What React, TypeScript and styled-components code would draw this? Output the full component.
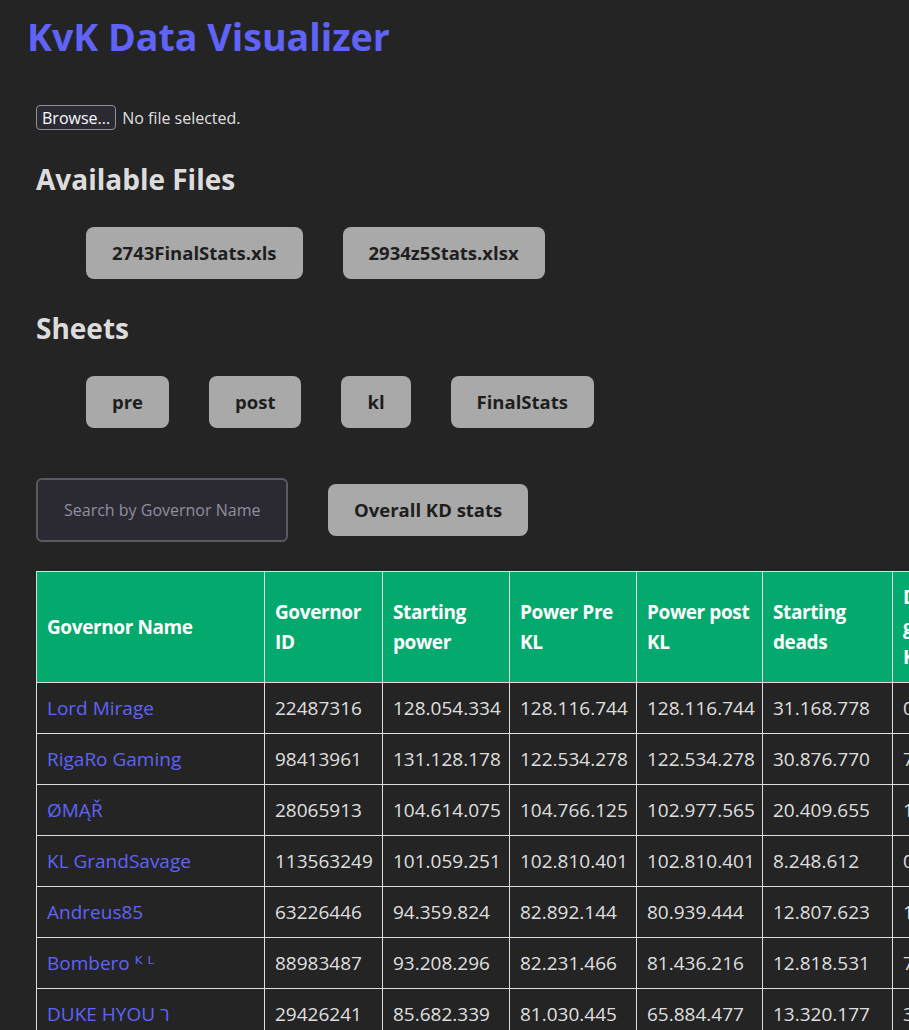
import React, { useState } from 'react'
import styled, { createGlobalStyle } from 'styled-components'

const GlobalStyle = createGlobalStyle`
  html, body {
    margin: 0;
    padding: 0;
    background-color: #242424;
    overflow-x: hidden;
  }
  body {
    font-family: 'Open Sans', 'DejaVu Sans', sans-serif;
    color: rgba(255, 255, 255, 0.87);
    line-height: 1.5;
  }
`

const Page = styled.div`
  padding-top: 14px;
  padding-bottom: 40px;
`

const Title = styled.h1`
  margin: 0;
  padding-left: 27px;
  font-size: 37.6px;
  font-weight: 700;
  line-height: 1.2;
  color: #5f63f7;
`

const Main = styled.div`
  padding: 0 36px;
`

const FileRow = styled.div`
  display: flex;
  align-items: center;
  gap: 6px;
  margin-top: 46px;
  font-size: 16px;
`

const BrowseButton = styled.button`
  font-family: inherit;
  font-size: 16px;
  color: #fbfbfe;
  background-color: #2b2a33;
  border: 1px solid #8f8f9d;
  border-radius: 4px;
  padding: 0 5px;
  height: 25px;
  line-height: 22px;
`

const Heading = styled.h2`
  margin: 30px 0 0 0;
  font-size: 28px;
  font-weight: 700;
  line-height: 1.4;
  color: rgba(255, 255, 255, 0.87);
`

const ButtonRow = styled.div`
  display: flex;
  gap: 40px;
  margin: 28px 0 0 50px;
`

const GrayButton = styled.button`
  font-family: inherit;
  font-size: 18.5px;
  font-weight: 700;
  color: #1e1e1e;
  background-color: #a9a9a9;
  border: none;
  border-radius: 8px;
  padding: 11px 26px;
  line-height: 30px;
  cursor: pointer;
`

const SearchRow = styled.div`
  display: flex;
  align-items: center;
  gap: 40px;
  margin-top: 50px;
`

const SearchInput = styled.input`
  box-sizing: border-box;
  width: 252px;
  height: 64px;
  padding: 0 26px;
  font-family: inherit;
  font-size: 16px;
  color: #fbfbfe;
  background-color: #2b2a33;
  border: 2px solid #5b5a63;
  border-radius: 6px;
  outline: none;
  &::placeholder {
    color: #8f8f9d;
  }
`

const TableWrap = styled.div`
  margin-top: 29px;
  width: 873px;
  overflow: hidden;
`

const Table = styled.table`
  border-collapse: collapse;
  table-layout: fixed;
  width: 1100px;
  font-size: 19px;
`

const Th = styled.th<{ $w: number }>`
  width: ${(p) => p.$w}px;
  box-sizing: border-box;
  padding: 10px;
  line-height: 30px;
  text-align: left;
  font-weight: 700;
  letter-spacing: -0.4px;
  color: #fff;
  background-color: #04aa6d;
  border: 1px solid #ddd;
`

const Td = styled.td`
  padding: 10px;
  line-height: 30px;
  border: 1px solid #ddd;
  white-space: nowrap;
  overflow: hidden;
  color: rgba(255, 255, 255, 0.87);
`

const NameLink = styled.a`
  color: #5f63f7;
  text-decoration: none;
  cursor: pointer;
`

const columns = [
  { label: 'Governor Name', w: 228 },
  { label: 'Governor ID', w: 118 },
  { label: 'Starting power', w: 127 },
  { label: 'Power Pre KL', w: 127 },
  { label: 'Power post KL', w: 126 },
  { label: 'Starting deads', w: 130 },
  { label: 'Deads gained KvK', w: 110 },
  { label: 'Kill points', w: 134 },
]

const rows = [
  ['Lord Mirage', '22487316', '128.054.334', '128.116.744', '128.116.744', '31.168.778', '0', '0'],
  ['RigaRo Gaming', '98413961', '131.128.178', '122.534.278', '122.534.278', '30.876.770', '7.452.118', '91.203.440'],
  ['ØMĄŘ', '28065913', '104.614.075', '104.766.125', '102.977.565', '20.409.655', '1.530.225', '64.118.230'],
  ['KL GrandSavage', '113563249', '101.059.251', '102.810.401', '102.810.401', '8.248.612', '0', '0'],
  ['Andreus85', '63226446', '94.359.824', '82.892.144', '80.939.444', '12.807.623', '1.845.790', '58.412.905'],
  ['Bombero ᴷ ᴸ', '88983487', '93.208.296', '82.231.466', '81.436.216', '12.818.531', '797.320', '41.009.675'],
  ['DUKE HYOU ר', '29426241', '85.682.339', '81.030.445', '65.884.477', '13.320.177', '3.612.980', '77.330.120'],
]

export default function App() {
  const [search, setSearch] = useState('')
  const files = ['2743FinalStats.xls', '2934z5Stats.xlsx']
  const sheets = ['pre', 'post', 'kl', 'FinalStats']
  const shown = rows.filter((r) => r[0].toLowerCase().includes(search.toLowerCase()))

  return (
    <Page>
      <GlobalStyle />
      <Title>KvK Data Visualizer</Title>
      <Main>
        <FileRow>
          <BrowseButton>Browse...</BrowseButton>
          <span>No file selected.</span>
        </FileRow>

        <Heading>Available Files</Heading>
        <ButtonRow>
          {files.map((f) => (
            <GrayButton key={f}>{f}</GrayButton>
          ))}
        </ButtonRow>

        <Heading>Sheets</Heading>
        <ButtonRow>
          {sheets.map((s) => (
            <GrayButton key={s}>{s}</GrayButton>
          ))}
        </ButtonRow>

        <SearchRow>
          <SearchInput
            placeholder='Search by Governor Name'
            type='text'
            value={search}
            onChange={(e) => setSearch(e.target.value)}
          />
          <GrayButton>Overall KD stats</GrayButton>
        </SearchRow>

        <TableWrap>
          <Table>
            <thead>
              <tr>
                {columns.map((c) => (
                  <Th key={c.label} $w={c.w}>{c.label}</Th>
                ))}
              </tr>
            </thead>
            <tbody>
              {shown.map((r) => (
                <tr key={r[1]}>
                  <Td><NameLink>{r[0]}</NameLink></Td>
                  {r.slice(1).map((v, i) => (
                    <Td key={i}>{v}</Td>
                  ))}
                </tr>
              ))}
            </tbody>
          </Table>
        </TableWrap>
      </Main>
    </Page>
  )
}
